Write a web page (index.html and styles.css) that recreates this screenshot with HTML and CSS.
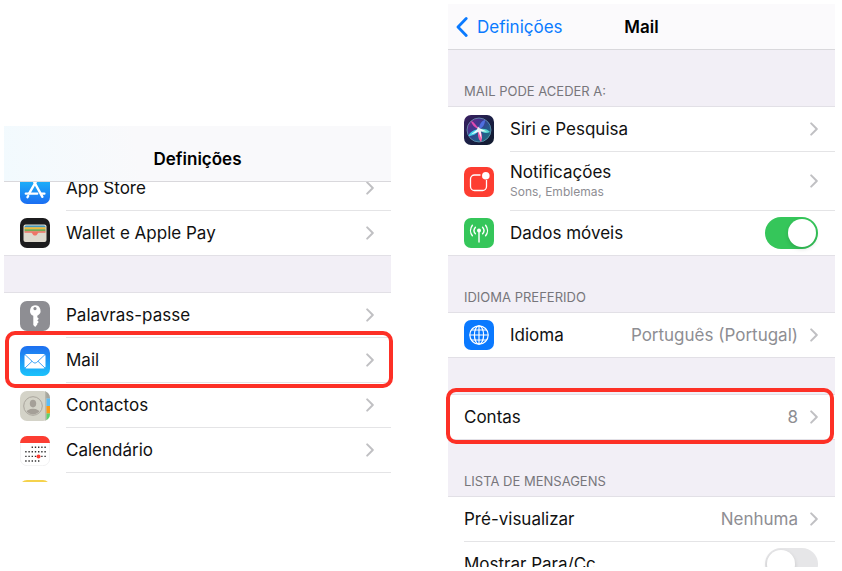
FILE: index.html
```html
<!DOCTYPE html>
<html lang="pt">
<head>
  <meta charset="utf-8">
  <title>Definições</title>
  <meta name="viewport" content="width=device-width, initial-scale=1">
  <link rel="stylesheet" href="styles.css">
</head>
<body>

  <svg class="defs" width="0" height="0" aria-hidden="true">
    <symbol id="chevron" viewBox="0 0 8 14">
      <path d="M1.2 1.4 L6.8 7 L1.2 12.6" fill="none" stroke="#c0c0c3" stroke-width="2" stroke-linecap="round" stroke-linejoin="round"/>
    </symbol>
  </svg>

  <main class="screens">

    <section class="screen screen-settings">
      <header class="bar bar-large">
        <h1 class="bar-title">Definições</h1>
      </header>

      <nav class="group group-scrolled">
        <a href="#" class="row">
          <svg class="icon" viewBox="0 0 30 30">
            <defs>
              <linearGradient id="store" x1="0" y1="0" x2="0" y2="1">
                <stop offset="0" stop-color="#1fc4fb"/>
                <stop offset="1" stop-color="#1a6df2"/>
              </linearGradient>
            </defs>
            <rect width="30" height="30" rx="7" fill="url(#store)"/>
            <g stroke="#fff" stroke-width="2.4" stroke-linecap="round" fill="none">
              <path d="M16.6 6.5 L9.3 19.2"/>
              <path d="M13.4 6.5 L22.4 22.8"/>
              <path d="M5.8 19.6 H17.2 M21.6 19.6 H24.4"/>
              <path d="M8.2 22 L7.5 23.2"/>
            </g>
          </svg>
          <span class="content">
            <span class="label">App Store</span>
            <svg class="chevron"><use href="#chevron"/></svg>
          </span>
        </a>
        <a href="#" class="row">
          <svg class="icon" viewBox="0 0 30 30">
            <rect width="30" height="30" rx="7" fill="#1c1c1e"/>
            <rect x="3.5" y="6.5" width="23" height="17.5" rx="2" fill="#ddd9ce"/>
            <path d="M4.5 9 a1.5 1.5 0 0 1 1.5 -1.5 h18 a1.5 1.5 0 0 1 1.5 1.5 v.5 h-21z" fill="#3f97c0"/>
            <rect x="4.5" y="9.3" width="21" height="2" fill="#f0b93a"/>
            <rect x="4.5" y="11.2" width="21" height="2.2" fill="#72aa53"/>
            <path d="M4.5 13.3 h21 v1.4 h-6.3 c-1.2 0 -1.4 .6 -1.8 1.3 c-.5 1 -1.3 1.6 -2.4 1.6 s-1.9 -.6 -2.4 -1.6 c-.4 -.7 -.6 -1.3 -1.8 -1.3 h-6.3z" fill="#ee7467"/>
          </svg>
          <span class="content">
            <span class="label">Wallet e Apple Pay</span>
            <svg class="chevron"><use href="#chevron"/></svg>
          </span>
        </a>
      </nav>

      <div class="spacer"></div>

      <nav class="group group-open">
        <a href="#" class="row">
          <svg class="icon" viewBox="0 0 30 30">
            <rect width="30" height="30" rx="7" fill="#8e8e93"/>
            <path fill="#fff" fill-rule="evenodd" d="M15 4.3 a5.5 5.5 0 0 1 2.3 10.5 v1.4 l1.5 1.6 -1.5 1.6 1.5 1.6 -1.5 1.5 v1 L15.2 26 13.3 24 V14.8 A5.5 5.5 0 0 1 15 4.3z M15 6 a1.6 1.6 0 1 0 .01 0z"/>
          </svg>
          <span class="content">
            <span class="label">Palavras-passe</span>
            <svg class="chevron"><use href="#chevron"/></svg>
          </span>
        </a>
        <a href="#" class="row highlight highlight-left">
          <svg class="icon" viewBox="0 0 30 30">
            <defs>
              <linearGradient id="mail" x1="0" y1="0" x2="0" y2="1">
                <stop offset="0" stop-color="#1e6ff0"/>
                <stop offset="1" stop-color="#1bc3fb"/>
              </linearGradient>
            </defs>
            <rect width="30" height="30" rx="7" fill="url(#mail)"/>
            <rect x="4.5" y="8" width="21" height="14.5" rx="2" fill="#fff"/>
            <path d="M5 8.6 L13.3 16.4 Q15 17.9 16.7 16.4 L25 8.6 M5 22 L12 15.3 M25 22 L18 15.3" fill="none" stroke="#2b9af5" stroke-width=".9"/>
          </svg>
          <span class="content">
            <span class="label">Mail</span>
            <svg class="chevron"><use href="#chevron"/></svg>
          </span>
        </a>
        <a href="#" class="row">
          <svg class="icon" viewBox="0 0 30 30">
            <defs>
              <clipPath id="tile"><rect width="30" height="30" rx="7"/></clipPath>
              <clipPath id="portrait"><circle cx="13" cy="15" r="8.4"/></clipPath>
            </defs>
            <g clip-path="url(#tile)">
              <rect width="30" height="30" fill="#d4d3c8"/>
              <rect x="25.5" width="4.5" height="7.5" fill="#a5a59d"/>
              <rect x="26.3" y="7.5" width="3.7" height="7.5" fill="#5ebdf5"/>
              <rect x="26.3" y="15" width="3.7" height="7.5" fill="#fb9a17"/>
              <rect x="26.3" y="22.5" width="3.7" height="7.5" fill="#5bd26b"/>
              <rect x="25.2" width="1.1" height="30" fill="#b5b5ab"/>
            </g>
            <circle cx="13" cy="15" r="9.3" fill="none" stroke="#a5a098" stroke-width=".9"/>
            <g clip-path="url(#portrait)" fill="#a5a098">
              <ellipse cx="13" cy="12.6" rx="3.2" ry="3.8"/>
              <ellipse cx="13" cy="22.5" rx="7.2" ry="4.7"/>
            </g>
          </svg>
          <span class="content">
            <span class="label">Contactos</span>
            <svg class="chevron"><use href="#chevron"/></svg>
          </span>
        </a>
        <a href="#" class="row">
          <svg class="icon" viewBox="0 0 30 30">
            <rect x=".3" y=".3" width="29.4" height="29.4" rx="7" fill="#fff" stroke="#e8e8ea" stroke-width=".6"/>
            <path d="M0 7 a7 7 0 0 1 7 -7 h16 a7 7 0 0 1 7 7z" fill="#fc3d32"/>
            <g stroke="#333" stroke-width="1.4" stroke-dasharray="1.4 1.8">
              <path d="M11.6 11.2 H25.8"/>
              <path d="M5.2 15.8 H25.8"/>
              <path d="M5.2 20.4 H25.8"/>
              <path d="M5.2 25 H19.4"/>
            </g>
            <circle cx="18.5" cy="20.4" r="2" fill="#fc3d32"/>
          </svg>
          <span class="content">
            <span class="label">Calendário</span>
            <svg class="chevron"><use href="#chevron"/></svg>
          </span>
        </a>
        <div class="row row-peek">
          <svg class="icon" viewBox="0 0 30 30">
            <rect width="30" height="30" rx="7" fill="#f5d24c"/>
          </svg>
        </div>
      </nav>
    </section>

    <section class="screen">
      <header class="bar">
        <a href="#" class="back">
          <svg class="back-arrow" viewBox="0 0 12 20">
            <path d="M10.2 1.6 L2 10 L10.2 18.4" fill="none" stroke="#0a7aff" stroke-width="2.8" stroke-linecap="round" stroke-linejoin="round"/>
          </svg>
          Definições
        </a>
        <h1 class="bar-title">Mail</h1>
      </header>

      <h2 class="group-title">MAIL PODE ACEDER A:</h2>
      <div class="group">
        <a href="#" class="row">
          <svg class="icon" viewBox="0 0 30 30">
            <defs>
              <linearGradient id="siri" x1="0" y1="0" x2="1" y2="1">
                <stop offset="0" stop-color="#3a1f63"/>
                <stop offset=".5" stop-color="#1c2046"/>
                <stop offset="1" stop-color="#101a2c"/>
              </linearGradient>
              <linearGradient id="orb" x1="0" y1="0" x2="1" y2="1">
                <stop offset="0" stop-color="#c42b9b"/>
                <stop offset=".3" stop-color="#5a3fb8"/>
                <stop offset=".65" stop-color="#2d7fc0"/>
                <stop offset="1" stop-color="#25b3a6"/>
              </linearGradient>
            </defs>
            <rect width="30" height="30" rx="7" fill="url(#siri)"/>
            <circle cx="15" cy="15" r="12" fill="url(#orb)" fill-opacity=".6" stroke="#6fa5bd" stroke-width=".7"/>
            <path d="M15 14 C9 15 5 18 4.5 21 C9 21 13 19 15 14z" fill="#3fd0e8"/>
            <path d="M15 14 C12 10 10 7 7 6 C8 10 11 13 15 14z" fill="#e04bb0"/>
            <path d="M15 14 C13 19 14 24 17 27 C19 23 18 18 15 14z" fill="#ef5aa8"/>
            <path d="M15 14 C19 13 24 14 26 17 C22 19 18 18 15 14z" fill="#55d7d0"/>
            <path d="M15 14 C15 10 17 6 21 5 C21 9 19 13 15 14z" fill="#4f6fe0"/>
            <path d="M14 11.5 L16 13.5 L23 16.5 L17 16.5 L17.5 24 L14.5 17 L7 19.5 L13 14.5z" fill="#fff" fill-opacity=".85"/>
          </svg>
          <span class="content">
            <span class="label">Siri e Pesquisa</span>
            <svg class="chevron"><use href="#chevron"/></svg>
          </span>
        </a>
        <a href="#" class="row row-tall">
          <svg class="icon" viewBox="0 0 30 30">
            <rect width="30" height="30" rx="7" fill="#fd3d31"/>
            <path d="M16.5 8 H10.5 A4 4 0 0 0 6.5 12 V19.5 A4 4 0 0 0 10.5 23.5 H18.5 A4 4 0 0 0 22.5 19.5 V13" fill="none" stroke="#fff" stroke-width="1.3"/>
            <circle cx="21.8" cy="8.7" r="3.8" fill="#fff"/>
          </svg>
          <span class="content">
            <span class="label">Notificações <small class="detail">Sons, Emblemas</small></span>
            <svg class="chevron"><use href="#chevron"/></svg>
          </span>
        </a>
        <label class="row">
          <svg class="icon" viewBox="0 0 30 30">
            <rect width="30" height="30" rx="7" fill="#35c65a"/>
            <circle cx="15" cy="12.5" r="2" fill="#fff"/>
            <g fill="none" stroke="#fff" stroke-width="1.4" stroke-linecap="round">
              <path d="M15 13 V24"/>
              <path d="M11.4 9.2 A5 5 0 0 0 11.4 15.8"/>
              <path d="M18.6 9.2 A5 5 0 0 1 18.6 15.8"/>
              <path d="M8.4 7.2 A8.6 8.6 0 0 0 8.4 17.8"/>
              <path d="M21.6 7.2 A8.6 8.6 0 0 1 21.6 17.8"/>
            </g>
          </svg>
          <span class="content">
            <span class="label">Dados móveis</span>
            <input type="checkbox" class="switch" checked>
          </span>
        </label>
      </div>

      <h2 class="group-title">IDIOMA PREFERIDO</h2>
      <div class="group">
        <a href="#" class="row">
          <svg class="icon" viewBox="0 0 30 30">
            <rect width="30" height="30" rx="7" fill="#0a79ff"/>
            <g fill="none" stroke="#fff" stroke-width="1.2">
              <circle cx="15" cy="15" r="9.2"/>
              <ellipse cx="15" cy="15" rx="4.6" ry="9.2"/>
              <path d="M15 5.8 V24.2 M5.8 15 H24.2 M7.5 10 H22.5 M7.5 20 H22.5"/>
            </g>
          </svg>
          <span class="content">
            <span class="label">Idioma</span>
            <span class="value">Português (Portugal)</span>
            <svg class="chevron"><use href="#chevron"/></svg>
          </span>
        </a>
      </div>

      <div class="spacer"></div>

      <div class="group">
        <a href="#" class="row highlight highlight-right">
          <span class="content">
            <span class="label">Contas</span>
            <span class="value">8</span>
            <svg class="chevron"><use href="#chevron"/></svg>
          </span>
        </a>
      </div>

      <h2 class="group-title">LISTA DE MENSAGENS</h2>
      <div class="group group-open">
        <a href="#" class="row">
          <span class="content">
            <span class="label">Pré-visualizar</span>
            <span class="value">Nenhuma</span>
            <svg class="chevron"><use href="#chevron"/></svg>
          </span>
        </a>
        <label class="row row-cut">
          <span class="content">
            <span class="label">Mostrar Para/Cc</span>
            <input type="checkbox" class="switch">
          </span>
        </label>
      </div>
    </section>

  </main>

</body>
</html>
```

FILE: styles.css
```css
* {
  box-sizing: border-box;
}

body {
  margin: 0;
  background-color: white;
  color: #111;
  font-family: Inter, "Liberation Sans", sans-serif;
  font-size: 17px;
  line-height: 22px;
}

a {
  color: inherit;
  text-decoration: none;
}

.defs {
  position: absolute;
}

.screens {
  display: grid;
  grid-template-columns: 1fr 1fr;
  align-items: start;
  gap: 57px;
  padding: 4px 7px 4px 4px;
}

.screen-settings {
  margin-top: 122px;
}

/* top bars */

.bar {
  position: relative;
  z-index: 1;
  display: grid;
  grid-template-columns: 1fr auto 1fr;
  align-items: center;
  height: 46px;
  padding: 0 8px;
  background-color: #fbfafc;
  border-bottom: 1px solid #d9d8dc;
}

.bar-large {
  height: 56px;
  padding-top: 10px;
  background-image: linear-gradient(80deg, #f2fafe, #f9f9fb 35%);
}

.bar-title {
  grid-column: 2;
  margin: 0;
  color: black;
  font-size: 17px;
  font-weight: 600;
}

.back {
  display: flex;
  align-items: center;
  gap: 9px;
  color: #0a7aff;
}

.back-arrow {
  width: 12px;
  height: 20px;
}

/* grey areas between groups */

.spacer {
  height: 37px;
  background-color: #f2eff6;
  border-bottom: 1px solid #e2e0e6;
}

.group-title {
  display: flex;
  align-items: flex-end;
  height: 57px;
  margin: 0;
  padding: 0 16px 6px;
  background-color: #f2eff6;
  border-bottom: 1px solid #e2e0e6;
  color: #77767b;
  font-size: 13px;
  font-weight: 400;
  line-height: 18px;
}

/* rows */

.group {
  background-color: white;
}

.group-scrolled {
  margin-top: -16px;
}

.row {
  display: flex;
  align-items: center;
  gap: 16px;
  height: 45px;
  padding-left: 16px;
}

.row-tall {
  height: 59px;
}

.row-peek {
  align-items: flex-start;
  height: 9px;
  padding-top: 7px;
  overflow: hidden;
}

.row-cut {
  align-items: flex-start;
  height: 25px;
  overflow: hidden;
}

.row-cut .content {
  flex-shrink: 0;
  height: 45px;
}

.icon {
  flex-shrink: 0;
  width: 30px;
  height: 30px;
}

.content {
  flex: 1;
  display: flex;
  align-items: center;
  height: 100%;
  padding-right: 17px;
  border-bottom: 1px solid #e4e4e6;
}

.group:not(.group-open) .row:last-child {
  border-bottom: 1px solid #e2e0e6;
}

.group:not(.group-open) .row:last-child .content {
  border-bottom: none;
}

.label {
  flex: 1;
}

.detail {
  display: block;
  color: #8e8e93;
  font-size: 12px;
  line-height: 18px;
}

.value {
  color: #8e8e93;
}

.chevron {
  width: 8px;
  height: 14px;
  margin-left: 12px;
}

.switch {
  appearance: none;
  width: 53px;
  height: 32px;
  margin: 0;
  padding: 2px;
  border-radius: 16px;
  background-color: #e6e6e8;
}

.switch::before {
  content: "";
  display: block;
  width: 28px;
  height: 28px;
  border-radius: 50%;
  background-color: white;
  box-shadow: 0 2px 4px rgba(0, 0, 0, 0.15);
}

.switch:checked {
  background-color: #35c65a;
}

.switch:checked::before {
  margin-left: auto;
}

/* red frame drawn over the row to tap */

.highlight {
  position: relative;
}

.highlight::after {
  content: "";
  position: absolute;
  z-index: 2;
  top: -7px;
  bottom: -5px;
  border: 4px solid #fd3026;
  border-radius: 10px;
  pointer-events: none;
}

.highlight-left::after {
  left: 1px;
  right: -2px;
}

.highlight-right::after {
  left: -2px;
  right: 1px;
}
```
